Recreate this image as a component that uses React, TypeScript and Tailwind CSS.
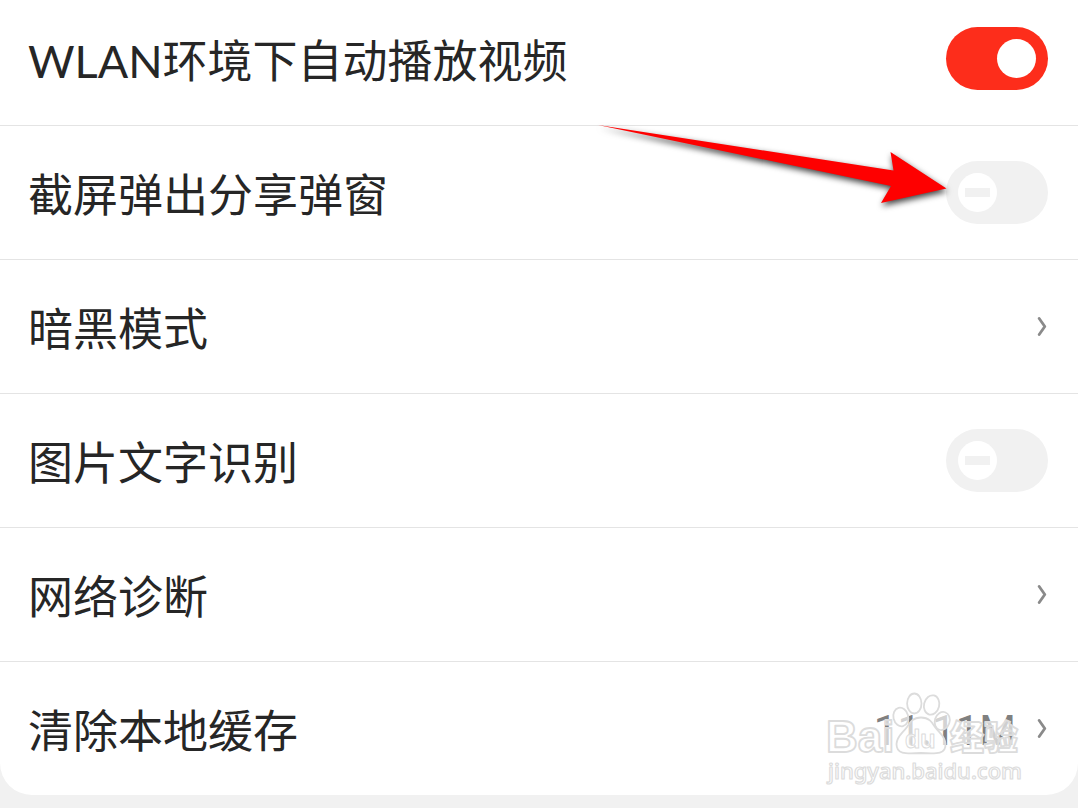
import type { ReactNode } from "react";

type Setting =
  | { id: string; label: string; kind: "switch"; on: boolean; pointer?: boolean }
  | { id: string; label: string; kind: "link"; value?: string };

const settings: Setting[] = [
  { id: "autoplay", label: "WLAN环境下自动播放视频", kind: "switch", on: true },
  { id: "screenshot", label: "截屏弹出分享弹窗", kind: "switch", on: false, pointer: true },
  { id: "dark", label: "暗黑模式", kind: "link" },
  { id: "ocr", label: "图片文字识别", kind: "switch", on: false },
  { id: "network", label: "网络诊断", kind: "link" },
  { id: "cache", label: "清除本地缓存", kind: "link", value: "11.11M" },
];

function Switch({ id, on }: { id: string; on: boolean }) {
  return (
    <input
      id={id}
      type="checkbox"
      role="switch"
      defaultChecked={on}
      className="flex h-[63px] w-[102px] shrink-0 cursor-pointer appearance-none items-center rounded-full bg-[#f1f1f1] px-3 before:size-[39px] before:shrink-0 before:rounded-full before:bg-white after:-ml-8 after:h-[9px] after:w-[25px] after:bg-[#f1f1f1] checked:justify-end checked:bg-[#fd2d1b] checked:after:hidden"
    />
  );
}

function Chevron() {
  return (
    <svg className="h-5 w-3 shrink-0" viewBox="0 0 12 20" fill="none">
      <path
        d="M3.2 1.5 L8.8 9.5 L3.2 17.5"
        stroke="#8a8a8a"
        strokeWidth="2.8"
        strokeLinecap="round"
        strokeLinejoin="round"
      />
    </svg>
  );
}

function PointerArrow() {
  return (
    <svg
      className="pointer-events-none absolute top-0 right-[122px] h-[90px] w-[360px] overflow-visible drop-shadow-[1px_3px_3px_rgba(0,0,0,0.75)]"
      viewBox="0 0 360 90"
    >
      <path
        d="M2 -1 L297.5 44.5 L294.5 26 L350.5 62.5 L285 77 L295 60 Z"
        fill="#fe0000"
      />
    </svg>
  );
}

function Watermark() {
  return (
    <svg
      className="pointer-events-none absolute right-14 bottom-[7px] h-[100px] w-[196px] overflow-visible"
      viewBox="0 0 196 100"
      fill="#ffffff"
      fillOpacity="0.65"
      stroke="#dcdcdc"
      strokeWidth="1.8"
      strokeLinejoin="round"
    >
      <text x="0" y="64" fontSize="44" fontWeight="700" fontFamily="Liberation Sans, sans-serif">
        Bai
      </text>
      <ellipse cx="88.3" cy="15.5" rx="7.2" ry="10" />
      <ellipse cx="105.6" cy="17" rx="7.6" ry="9.8" transform="rotate(14 105.6 17)" />
      <ellipse cx="74.8" cy="29" rx="7.4" ry="9.4" transform="rotate(-14 74.8 29)" />
      <ellipse cx="116.2" cy="33" rx="7.4" ry="9.2" transform="rotate(18 116.2 33)" />
      <path d="M95 29.5 C87 29.5 84 34 81 39 C76 46 71 48 70.5 56 C70.5 66 78 66 95 65 C112 66 120 66 119.5 56 C119 48 114 46 109 39 C106 34 103 29.5 95 29.5 Z" />
      <text x="79" y="60" fontSize="25" fontWeight="700" fontFamily="Liberation Sans, sans-serif" strokeWidth="1">
        du
      </text>
      <text x="124" y="62" fontSize="34" fontWeight="900" fontFamily="Noto Sans CJK SC, sans-serif">
        经验
      </text>
      <text x="2" y="91" fontSize="22" fontWeight="500" fontFamily="Noto Sans, sans-serif" strokeWidth="1.2">
        jingyan.baidu.com
      </text>
    </svg>
  );
}

function Row({ children }: { children: ReactNode }) {
  return (
    <li className="relative h-[134px] border-b border-[#e4e4e4] last:h-[133px] last:border-b-0">
      {children}
    </li>
  );
}

export default function App() {
  return (
    <main className="min-h-screen overflow-hidden bg-[#f1f1f1] font-['Lato','Noto_Sans_CJK_SC',sans-serif] text-[45px] leading-[54px] text-[#262626]">
      <section className="relative -mt-2 rounded-b-[32px] bg-white">
        <ul>
          {settings.map((item) => (
            <Row key={item.id}>
              {item.kind === "switch" ? (
                <div className="flex h-full items-center justify-between pr-[30px] pl-7">
                  <label htmlFor={item.id} className="pt-1">
                    {item.label}
                  </label>
                  <Switch id={item.id} on={item.on} />
                  {item.pointer && <PointerArrow />}
                </div>
              ) : (
                <button
                  type="button"
                  className="flex h-full w-full cursor-pointer items-center justify-between pr-[30px] pl-7 text-left"
                >
                  <span className="pt-1">{item.label}</span>
                  <span className="flex items-center gap-5">
                    {item.value && (
                      <span className="pt-1 font-['Roboto',sans-serif] text-[42px] text-[#808080]">
                        {item.value}
                      </span>
                    )}
                    <Chevron />
                  </span>
                </button>
              )}
            </Row>
          ))}
        </ul>
        <Watermark />
      </section>
    </main>
  );
}
